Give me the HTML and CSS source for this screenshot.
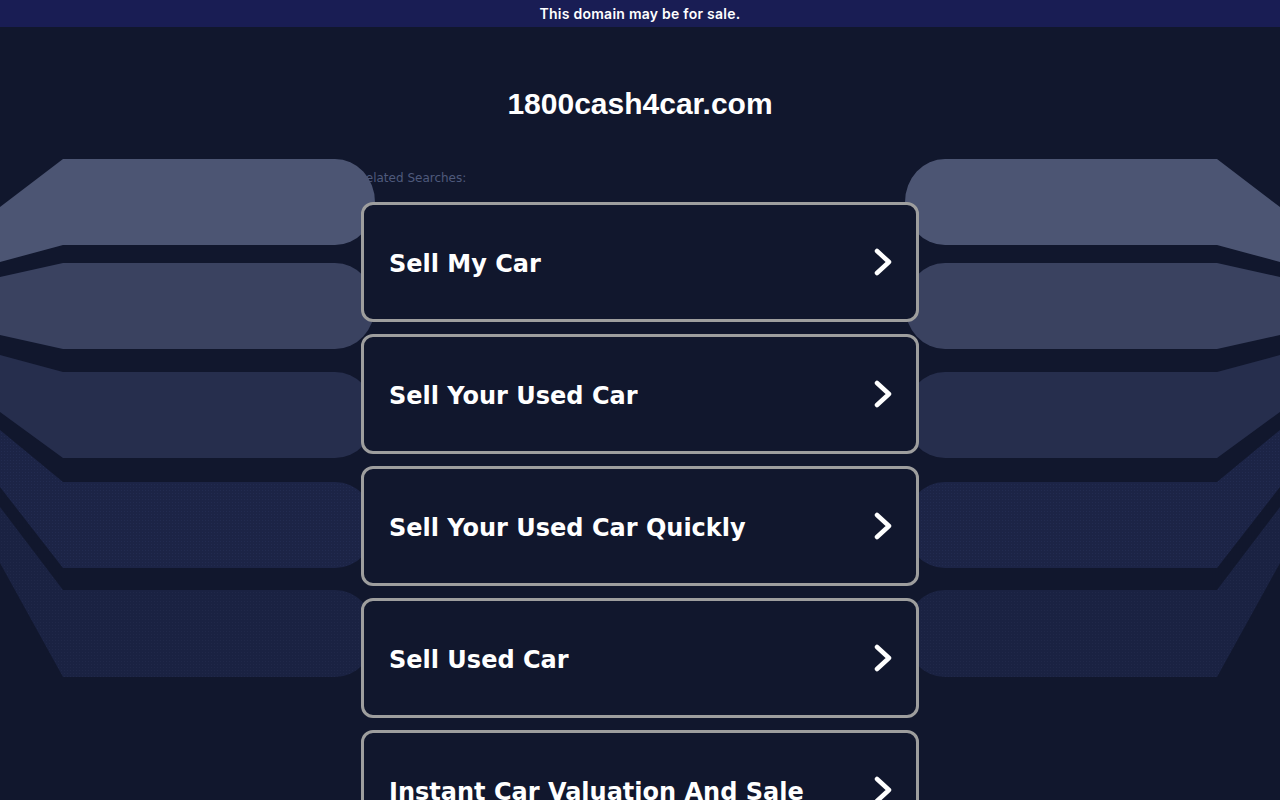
FILE: index.html
```html
<!DOCTYPE html>
<html>
<head>
<meta charset="utf-8">
<title>1800cash4car.com</title>
<link rel="stylesheet" href="styles.css">
</head>
<body>
<div class="banner">This domain may be for sale.</div>

<svg class="bands bands-left" width="380" height="700" viewBox="0 0 380 700" aria-hidden="true">
  <defs>
    <pattern id="dotsL" width="3" height="3" patternUnits="userSpaceOnUse">
      <rect width="3" height="3" fill="#1c2446"/>
      <rect x="1" y="1" width="1" height="1" fill="#222b50"/>
    </pattern>
    <pattern id="dotsL2" width="3" height="3" patternUnits="userSpaceOnUse">
      <rect width="3" height="3" fill="#1a2242"/>
      <rect x="1" y="1" width="1" height="1" fill="#202849"/>
    </pattern>
  </defs>
  <path fill="#4c5573" d="M0 207 L63 159 L335 159 A40 43 0 0 1 335 245 L63 245 L0 262 Z"/>
  <path fill="#3a4260" d="M0 277 L63 263 L335 263 A40 43 0 0 1 335 349 L63 349 L0 335 Z"/>
  <path fill="#262e4d" d="M0 355 L63 372 L335 372 A40 43 0 0 1 335 458 L63 458 L0 412 Z"/>
  <path fill="url(#dotsL)" d="M0 430 L63 482 L335 482 A40 43 0 0 1 335 568 L63 568 L0 487 Z"/>
  <path fill="url(#dotsL2)" d="M0 507 L63 590 L335 590 A40 43.5 0 0 1 335 677 L63 677 L0 563 Z"/>
</svg>

<svg class="bands bands-right" width="380" height="700" viewBox="0 0 380 700" aria-hidden="true">
  <defs>
    <pattern id="dotsR" width="3" height="3" patternUnits="userSpaceOnUse">
      <rect width="3" height="3" fill="#1c2446"/>
      <rect x="1" y="1" width="1" height="1" fill="#222b50"/>
    </pattern>
    <pattern id="dotsR2" width="3" height="3" patternUnits="userSpaceOnUse">
      <rect width="3" height="3" fill="#1a2242"/>
      <rect x="1" y="1" width="1" height="1" fill="#202849"/>
    </pattern>
  </defs>
  <path fill="#4c5573" d="M0 207 L63 159 L335 159 A40 43 0 0 1 335 245 L63 245 L0 262 Z"/>
  <path fill="#3a4260" d="M0 277 L63 263 L335 263 A40 43 0 0 1 335 349 L63 349 L0 335 Z"/>
  <path fill="#262e4d" d="M0 355 L63 372 L335 372 A40 43 0 0 1 335 458 L63 458 L0 412 Z"/>
  <path fill="url(#dotsR)" d="M0 430 L63 482 L335 482 A40 43 0 0 1 335 568 L63 568 L0 487 Z"/>
  <path fill="url(#dotsR2)" d="M0 507 L63 590 L335 590 A40 43.5 0 0 1 335 677 L63 677 L0 563 Z"/>
</svg>

<main class="content">
  <h1 class="domain">1800cash4car.com</h1>
  <div class="related">Related Searches:</div>
  <ul class="cards">
    <li class="card"><span class="card-text">Sell My Car</span><svg class="chev" width="18" height="28" viewBox="0 0 18 28"><path d="M3 3 L15 14 L3 25"/></svg></li>
    <li class="card"><span class="card-text">Sell Your Used Car</span><svg class="chev" width="18" height="28" viewBox="0 0 18 28"><path d="M3 3 L15 14 L3 25"/></svg></li>
    <li class="card"><span class="card-text">Sell Your Used Car Quickly</span><svg class="chev" width="18" height="28" viewBox="0 0 18 28"><path d="M3 3 L15 14 L3 25"/></svg></li>
    <li class="card"><span class="card-text">Sell Used Car</span><svg class="chev" width="18" height="28" viewBox="0 0 18 28"><path d="M3 3 L15 14 L3 25"/></svg></li>
    <li class="card"><span class="card-text">Instant Car Valuation And Sale</span><svg class="chev" width="18" height="28" viewBox="0 0 18 28"><path d="M3 3 L15 14 L3 25"/></svg></li>
  </ul>
</main>
</body>
</html>
```

FILE: styles.css
```css
html, body {
  margin: 0;
  padding: 0;
}
body {
  background: #11172d;
  min-height: 800px;
  overflow: hidden;
  font-family: "DejaVu Sans", Verdana, sans-serif;
  color: #fff;
}
.banner {
  height: 27px;
  background: #191d54;
  color: #fff;
  font-family: Inter, "Open Sans", sans-serif;
  font-weight: 600;
  font-size: 14px;
  display: flex;
  align-items: center;
  justify-content: center;
  letter-spacing: 0.25px;
}
.bands {
  position: absolute;
  top: 0;
  z-index: 1;
}
.bands-left {
  left: 0;
}
.bands-right {
  right: 0;
  transform: scaleX(-1);
}
.content {
  width: 558px;
  margin: 0 auto;
  display: flex;
  flex-direction: column;
}
.domain {
  margin: 59px 0 0;
  font-family: "Liberation Sans", Arial, sans-serif;
  font-weight: 700;
  font-size: 30px;
  line-height: 36px;
  text-align: center;
  color: #fff;
}
.related {
  margin: 48px 0 0 -3px;
  font-size: 12px;
  line-height: 16px;
  color: #4f5a7c;
  position: relative;
  z-index: 0;
}
.cards {
  list-style: none;
  margin: 16px 0 0;
  padding: 0;
  display: flex;
  flex-direction: column;
  gap: 12px;
  position: relative;
  z-index: 2;
}
.card {
  height: 114px;
  border: 3px solid #9e9e9e;
  border-radius: 12px;
  background: #11172d;
  display: flex;
  align-items: center;
  justify-content: space-between;
  padding: 0 24px 0 25px;
}
.card-text {
  font-weight: 700;
  font-size: 24px;
  letter-spacing: 0;
  padding-top: 4px;
  color: #fff;
}
.chev {
  flex: none;
}
.chev path {
  fill: none;
  stroke: #fff;
  stroke-width: 4.5;
  stroke-linecap: round;
  stroke-linejoin: round;
}
```
